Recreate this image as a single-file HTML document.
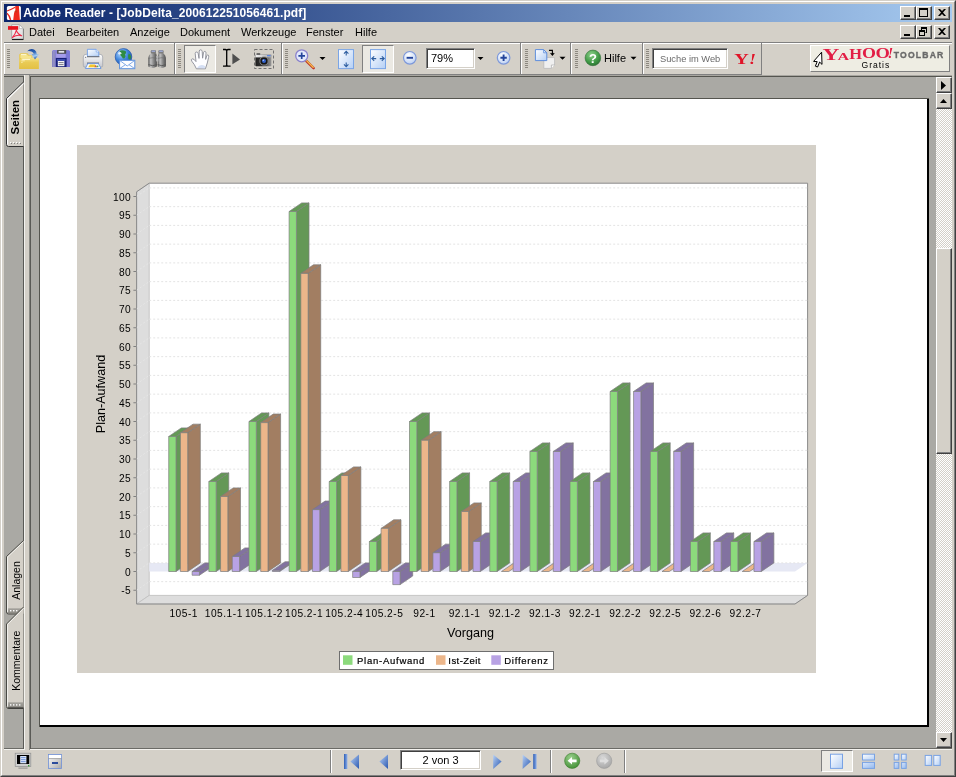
<!DOCTYPE html>
<html lang="de"><head><meta charset="utf-8"><title>Adobe Reader - [JobDelta_200612251056461.pdf]</title>
<style>
html,body{margin:0;padding:0}
body{width:956px;height:777px;position:relative;overflow:hidden;background:#d4d0c8;font-family:"Liberation Sans",sans-serif;font-size:11px;color:#000}
.a{position:absolute}
#win{left:0;top:0;width:956px;height:777px;box-sizing:border-box;border:1px solid;border-color:#d4d0c8 #404040 #404040 #d4d0c8}
#win2{left:1px;top:1px;width:954px;height:775px;box-sizing:border-box;border:1px solid;border-color:#fff #808080 #808080 #fff}
#title{left:4px;top:4px;width:948px;height:18px;background:linear-gradient(90deg,#0a246a 0%,#a6caf0 100%)}
#ttxt{left:23.3px;top:6px;color:#fff;font-weight:bold;font-size:12px;line-height:14px;white-space:nowrap;letter-spacing:.08px}
.cb{width:16px;height:14px;box-sizing:border-box;background:#d4d0c8;border:1px solid;border-color:#fff #404040 #404040 #fff;box-shadow:inset -1px -1px 0 #808080}
.menu{top:25px;font-size:11px;line-height:14px;white-space:nowrap}
.tbline1{left:4px;top:42px;width:948px;height:1px;background:#808080}
.tbline2{left:4px;top:43px;width:948px;height:1px;background:#fff}
.grip{width:3px;height:20px;top:49px;background:repeating-linear-gradient(180deg,#8c8880 0,#8c8880 1px,#d4d0c8 1px,#d4d0c8 2px)}
.sepv{top:43px;width:2px;height:31px;border-left:1px solid #808080;border-right:1px solid #fff;box-sizing:border-box}
.pressed{background:#ebe9e3;box-sizing:border-box;border:1px solid;border-color:#808080 #fff #fff #808080}
.inp{background:#fff;box-sizing:border-box;border:1px solid;border-color:#808080 #fff #fff #808080;box-shadow:inset 1px 1px 0 #404040,inset -1px -1px 0 #d4d0c8}
svg{position:absolute;left:0;top:0;overflow:visible}
.tk{font-family:"Liberation Sans",sans-serif;font-size:10.2px;fill:#000;letter-spacing:.3px}
.ax{font-family:"Liberation Sans",sans-serif;font-size:12.6px;fill:#000}
.lg{font-family:"Liberation Sans",sans-serif;font-size:9.5px;fill:#000;letter-spacing:.75px;stroke:#000;stroke-width:.2px}
.sb{background:#d4d0c8;box-sizing:border-box;border:1px solid;border-color:#fff #404040 #404040 #fff;box-shadow:inset -1px -1px 0 #808080}
</style></head><body>
<div id="root" class="a" style="left:0;top:0;width:956px;height:777px;will-change:transform">
<div id="win" class="a"></div><div id="win2" class="a"></div>
<!-- title bar -->
<div id="title" class="a"></div>
<div id="ttxt" class="a">Adobe Reader - [JobDelta_200612251056461.pdf]</div>
<div class="a cb" style="left:900px;top:6px"></div><div class="a cb" style="left:916px;top:6px"></div><div class="a cb" style="left:934px;top:6px"></div>
<div class="a cb" style="left:900px;top:25px"></div><div class="a cb" style="left:916px;top:25px"></div><div class="a cb" style="left:934px;top:25px"></div>
<!-- menu -->
<div class="a menu" style="left:29px">Datei</div>
<div class="a menu" style="left:66px">Bearbeiten</div>
<div class="a menu" style="left:130px">Anzeige</div>
<div class="a menu" style="left:180px">Dokument</div>
<div class="a menu" style="left:241px">Werkzeuge</div>
<div class="a menu" style="left:306px">Fenster</div>
<div class="a menu" style="left:355px">Hilfe</div>
<div class="a tbline1"></div><div class="a tbline2"></div>
<!-- toolbar -->
<div class="a grip" style="left:7px"></div>
<div class="a sepv" style="left:174px"></div><div class="a grip" style="left:178px"></div>
<div class="a pressed" style="left:184px;top:45px;width:32px;height:28px"></div>
<div class="a sepv" style="left:281px"></div><div class="a grip" style="left:285px"></div>
<div class="a pressed" style="left:362px;top:45px;width:32px;height:28px"></div>
<div class="a inp" style="left:426px;top:48px;width:49px;height:21px"></div>
<div class="a" style="left:431px;top:51px;font-size:11px;line-height:14px">79%</div>
<div class="a sepv" style="left:520px"></div><div class="a grip" style="left:525px"></div>
<div class="a sepv" style="left:570px"></div><div class="a grip" style="left:575px"></div>
<div class="a" style="left:604px;top:51px;font-size:11px;line-height:14px">Hilfe</div>
<div class="a sepv" style="left:642px"></div><div class="a grip" style="left:646px"></div>
<div class="a inp" style="left:652px;top:48px;width:76px;height:21px"></div>
<div class="a" style="left:660px;top:53px;font-size:9.3px;line-height:12px;color:#6a6a6a;white-space:nowrap">Suche im Web</div>
<div class="a" style="left:761px;top:43px;width:1px;height:31px;background:#808080"></div>
<div class="a" style="left:810px;top:45px;width:140px;height:27px;box-sizing:border-box;background:#eeede3;border:1px solid;border-color:#fff #808080 #808080 #fff"></div>
<div class="a" style="left:4px;top:44px;width:1px;height:30px;background:#fff"></div>
<div class="a" style="left:4px;top:74px;width:758px;height:1px;background:#808080"></div>
<div class="a" style="left:4px;top:75px;width:948px;height:1px;background:#a8a6a0"></div>
<!-- workspace -->
<div class="a" style="left:4px;top:76px;width:948px;height:673px;background:#aaa9a4"></div>
<div class="a" style="left:4px;top:76px;width:948px;height:1px;background:#55554f"></div>
<div class="a" style="left:4px;top:748px;width:948px;height:1px;background:#6b6b66"></div>
<div class="a" style="left:4px;top:749px;width:948px;height:1px;background:#f4f3ef"></div>
<div class="a" style="left:23px;top:77px;width:1px;height:672px;background:#5a5a56"></div>
<div class="a" style="left:24px;top:75px;width:6px;height:675px;background:#d4d0c8;box-sizing:border-box;border-left:1px solid #f4f3ef;border-right:1px solid #8a8a84"></div>
<div class="a" style="left:30px;top:77px;width:1px;height:672px;background:#5a5a56"></div>
<!-- page -->
<div class="a" style="left:39px;top:98px;width:890px;height:629px;background:#000;box-sizing:border-box;border-top:1px solid #55554f;border-left:1px solid #55554f"></div>
<div class="a" style="left:40px;top:99px;width:887px;height:626px;background:#fff"></div>
<!-- scrollbar -->
<div class="a" style="left:936px;top:77px;width:16px;height:671px;background:repeating-conic-gradient(#fff 0 25%,#d4d0c8 0 50%) 0 0/2px 2px"></div>
<div class="a sb" style="left:936px;top:77px;width:16px;height:16px"></div>
<div class="a sb" style="left:936px;top:93px;width:16px;height:16px"></div>
<div class="a sb" style="left:936px;top:248px;width:16px;height:206px"></div>
<div class="a sb" style="left:936px;top:732px;width:16px;height:16px"></div>
<!-- status bar -->
<div class="a" style="left:4px;top:750px;width:948px;height:23px;background:#d4d0c8"></div>
<div class="a sepv" style="left:330px;top:750px;height:23px"></div>
<div class="a inp" style="left:400px;top:750px;width:81px;height:20px"></div>
<div class="a" style="left:400px;top:753px;width:81px;text-align:center;font-size:11px;line-height:14px">2 von 3</div>
<div class="a sepv" style="left:550px;top:750px;height:23px"></div>
<div class="a sepv" style="left:624px;top:750px;height:23px"></div>
<div class="a pressed" style="left:821px;top:750px;width:32px;height:22px"></div>
<svg width="956" height="777" viewBox="0 0 956 777">
<g id="chart">
<rect x="77" y="145" width="739" height="528" fill="#d4d0c8"/>
<polygon points="149.2,183.2 807.6,183.2 807.6,595.4 149.2,595.4" fill="#ffffff"/>
<polygon points="136.6,191.8 149.2,183.2 149.2,595.4 136.6,604" fill="#dddddd" stroke="#c0c0c0" stroke-width="0.8"/>
<polygon points="136.6,604 149.2,595.4 807.6,595.4 795,604" fill="#dddddd" stroke="#c0c0c0" stroke-width="0.8"/>
<path d="M136.6 191.8 L149.2 183.2 L807.6 183.2 L807.6 595.4" fill="none" stroke="#8a8a8a" stroke-width="1"/>
<path d="M136.6 191.8 L136.6 604 L795 604 L807.6 595.4" fill="none" stroke="#8a8a8a" stroke-width="1"/>
<polygon points="149.2,571.5 149.2,562.9 807.6,562.9 795,571.5" fill="#e6e8f4"/>
<path d="M136.6 590.25 L149.2 581.65" stroke="#e6e6e6" stroke-width="1" stroke-dasharray="2 2" fill="none"/>
<path d="M149.2 581.65 L807.6 581.65" stroke="#e4e4e4" stroke-width="1" stroke-dasharray="2 2" fill="none"/>
<path d="M133.4 590.25 L136.6 590.25" stroke="#808080" stroke-width="1" fill="none"/>
<text x="130.9" y="594.45" text-anchor="end" class="tk">-5</text>
<path d="M136.6 571.5 L149.2 562.9" stroke="#e6e6e6" stroke-width="1" stroke-dasharray="2 2" fill="none"/>
<path d="M149.2 562.9 L807.6 562.9" stroke="#e4e4e4" stroke-width="1" stroke-dasharray="2 2" fill="none"/>
<path d="M133.4 571.5 L136.6 571.5" stroke="#808080" stroke-width="1" fill="none"/>
<text x="130.9" y="575.7" text-anchor="end" class="tk">0</text>
<path d="M136.6 552.75 L149.2 544.15" stroke="#e6e6e6" stroke-width="1" stroke-dasharray="2 2" fill="none"/>
<path d="M149.2 544.15 L807.6 544.15" stroke="#e4e4e4" stroke-width="1" stroke-dasharray="2 2" fill="none"/>
<path d="M133.4 552.75 L136.6 552.75" stroke="#808080" stroke-width="1" fill="none"/>
<text x="130.9" y="556.95" text-anchor="end" class="tk">5</text>
<path d="M136.6 534 L149.2 525.4" stroke="#e6e6e6" stroke-width="1" stroke-dasharray="2 2" fill="none"/>
<path d="M149.2 525.4 L807.6 525.4" stroke="#e4e4e4" stroke-width="1" stroke-dasharray="2 2" fill="none"/>
<path d="M133.4 534 L136.6 534" stroke="#808080" stroke-width="1" fill="none"/>
<text x="130.9" y="538.2" text-anchor="end" class="tk">10</text>
<path d="M136.6 515.25 L149.2 506.65" stroke="#e6e6e6" stroke-width="1" stroke-dasharray="2 2" fill="none"/>
<path d="M149.2 506.65 L807.6 506.65" stroke="#e4e4e4" stroke-width="1" stroke-dasharray="2 2" fill="none"/>
<path d="M133.4 515.25 L136.6 515.25" stroke="#808080" stroke-width="1" fill="none"/>
<text x="130.9" y="519.45" text-anchor="end" class="tk">15</text>
<path d="M136.6 496.5 L149.2 487.9" stroke="#e6e6e6" stroke-width="1" stroke-dasharray="2 2" fill="none"/>
<path d="M149.2 487.9 L807.6 487.9" stroke="#e4e4e4" stroke-width="1" stroke-dasharray="2 2" fill="none"/>
<path d="M133.4 496.5 L136.6 496.5" stroke="#808080" stroke-width="1" fill="none"/>
<text x="130.9" y="500.7" text-anchor="end" class="tk">20</text>
<path d="M136.6 477.75 L149.2 469.15" stroke="#e6e6e6" stroke-width="1" stroke-dasharray="2 2" fill="none"/>
<path d="M149.2 469.15 L807.6 469.15" stroke="#e4e4e4" stroke-width="1" stroke-dasharray="2 2" fill="none"/>
<path d="M133.4 477.75 L136.6 477.75" stroke="#808080" stroke-width="1" fill="none"/>
<text x="130.9" y="481.95" text-anchor="end" class="tk">25</text>
<path d="M136.6 459 L149.2 450.4" stroke="#e6e6e6" stroke-width="1" stroke-dasharray="2 2" fill="none"/>
<path d="M149.2 450.4 L807.6 450.4" stroke="#e4e4e4" stroke-width="1" stroke-dasharray="2 2" fill="none"/>
<path d="M133.4 459 L136.6 459" stroke="#808080" stroke-width="1" fill="none"/>
<text x="130.9" y="463.2" text-anchor="end" class="tk">30</text>
<path d="M136.6 440.25 L149.2 431.65" stroke="#e6e6e6" stroke-width="1" stroke-dasharray="2 2" fill="none"/>
<path d="M149.2 431.65 L807.6 431.65" stroke="#e4e4e4" stroke-width="1" stroke-dasharray="2 2" fill="none"/>
<path d="M133.4 440.25 L136.6 440.25" stroke="#808080" stroke-width="1" fill="none"/>
<text x="130.9" y="444.45" text-anchor="end" class="tk">35</text>
<path d="M136.6 421.5 L149.2 412.9" stroke="#e6e6e6" stroke-width="1" stroke-dasharray="2 2" fill="none"/>
<path d="M149.2 412.9 L807.6 412.9" stroke="#e4e4e4" stroke-width="1" stroke-dasharray="2 2" fill="none"/>
<path d="M133.4 421.5 L136.6 421.5" stroke="#808080" stroke-width="1" fill="none"/>
<text x="130.9" y="425.7" text-anchor="end" class="tk">40</text>
<path d="M136.6 402.75 L149.2 394.15" stroke="#e6e6e6" stroke-width="1" stroke-dasharray="2 2" fill="none"/>
<path d="M149.2 394.15 L807.6 394.15" stroke="#e4e4e4" stroke-width="1" stroke-dasharray="2 2" fill="none"/>
<path d="M133.4 402.75 L136.6 402.75" stroke="#808080" stroke-width="1" fill="none"/>
<text x="130.9" y="406.95" text-anchor="end" class="tk">45</text>
<path d="M136.6 384 L149.2 375.4" stroke="#e6e6e6" stroke-width="1" stroke-dasharray="2 2" fill="none"/>
<path d="M149.2 375.4 L807.6 375.4" stroke="#e4e4e4" stroke-width="1" stroke-dasharray="2 2" fill="none"/>
<path d="M133.4 384 L136.6 384" stroke="#808080" stroke-width="1" fill="none"/>
<text x="130.9" y="388.2" text-anchor="end" class="tk">50</text>
<path d="M136.6 365.25 L149.2 356.65" stroke="#e6e6e6" stroke-width="1" stroke-dasharray="2 2" fill="none"/>
<path d="M149.2 356.65 L807.6 356.65" stroke="#e4e4e4" stroke-width="1" stroke-dasharray="2 2" fill="none"/>
<path d="M133.4 365.25 L136.6 365.25" stroke="#808080" stroke-width="1" fill="none"/>
<text x="130.9" y="369.45" text-anchor="end" class="tk">55</text>
<path d="M136.6 346.5 L149.2 337.9" stroke="#e6e6e6" stroke-width="1" stroke-dasharray="2 2" fill="none"/>
<path d="M149.2 337.9 L807.6 337.9" stroke="#e4e4e4" stroke-width="1" stroke-dasharray="2 2" fill="none"/>
<path d="M133.4 346.5 L136.6 346.5" stroke="#808080" stroke-width="1" fill="none"/>
<text x="130.9" y="350.7" text-anchor="end" class="tk">60</text>
<path d="M136.6 327.75 L149.2 319.15" stroke="#e6e6e6" stroke-width="1" stroke-dasharray="2 2" fill="none"/>
<path d="M149.2 319.15 L807.6 319.15" stroke="#e4e4e4" stroke-width="1" stroke-dasharray="2 2" fill="none"/>
<path d="M133.4 327.75 L136.6 327.75" stroke="#808080" stroke-width="1" fill="none"/>
<text x="130.9" y="331.95" text-anchor="end" class="tk">65</text>
<path d="M136.6 309 L149.2 300.4" stroke="#e6e6e6" stroke-width="1" stroke-dasharray="2 2" fill="none"/>
<path d="M149.2 300.4 L807.6 300.4" stroke="#e4e4e4" stroke-width="1" stroke-dasharray="2 2" fill="none"/>
<path d="M133.4 309 L136.6 309" stroke="#808080" stroke-width="1" fill="none"/>
<text x="130.9" y="313.2" text-anchor="end" class="tk">70</text>
<path d="M136.6 290.25 L149.2 281.65" stroke="#e6e6e6" stroke-width="1" stroke-dasharray="2 2" fill="none"/>
<path d="M149.2 281.65 L807.6 281.65" stroke="#e4e4e4" stroke-width="1" stroke-dasharray="2 2" fill="none"/>
<path d="M133.4 290.25 L136.6 290.25" stroke="#808080" stroke-width="1" fill="none"/>
<text x="130.9" y="294.45" text-anchor="end" class="tk">75</text>
<path d="M136.6 271.5 L149.2 262.9" stroke="#e6e6e6" stroke-width="1" stroke-dasharray="2 2" fill="none"/>
<path d="M149.2 262.9 L807.6 262.9" stroke="#e4e4e4" stroke-width="1" stroke-dasharray="2 2" fill="none"/>
<path d="M133.4 271.5 L136.6 271.5" stroke="#808080" stroke-width="1" fill="none"/>
<text x="130.9" y="275.7" text-anchor="end" class="tk">80</text>
<path d="M136.6 252.75 L149.2 244.15" stroke="#e6e6e6" stroke-width="1" stroke-dasharray="2 2" fill="none"/>
<path d="M149.2 244.15 L807.6 244.15" stroke="#e4e4e4" stroke-width="1" stroke-dasharray="2 2" fill="none"/>
<path d="M133.4 252.75 L136.6 252.75" stroke="#808080" stroke-width="1" fill="none"/>
<text x="130.9" y="256.95" text-anchor="end" class="tk">85</text>
<path d="M136.6 234 L149.2 225.4" stroke="#e6e6e6" stroke-width="1" stroke-dasharray="2 2" fill="none"/>
<path d="M149.2 225.4 L807.6 225.4" stroke="#e4e4e4" stroke-width="1" stroke-dasharray="2 2" fill="none"/>
<path d="M133.4 234 L136.6 234" stroke="#808080" stroke-width="1" fill="none"/>
<text x="130.9" y="238.2" text-anchor="end" class="tk">90</text>
<path d="M136.6 215.25 L149.2 206.65" stroke="#e6e6e6" stroke-width="1" stroke-dasharray="2 2" fill="none"/>
<path d="M149.2 206.65 L807.6 206.65" stroke="#e4e4e4" stroke-width="1" stroke-dasharray="2 2" fill="none"/>
<path d="M133.4 215.25 L136.6 215.25" stroke="#808080" stroke-width="1" fill="none"/>
<text x="130.9" y="219.45" text-anchor="end" class="tk">95</text>
<path d="M136.6 196.5 L149.2 187.9" stroke="#e6e6e6" stroke-width="1" stroke-dasharray="2 2" fill="none"/>
<path d="M149.2 187.9 L807.6 187.9" stroke="#e4e4e4" stroke-width="1" stroke-dasharray="2 2" fill="none"/>
<path d="M133.4 196.5 L136.6 196.5" stroke="#808080" stroke-width="1" fill="none"/>
<text x="130.9" y="200.7" text-anchor="end" class="tk">100</text>
<polygon points="176.04,436.5 188.64,427.9 188.64,562.9 176.04,571.5" fill="#649856" stroke="#7c7c7c" stroke-width="0.7"/>
<polygon points="168.72,436.5 181.32,427.9 188.64,427.9 176.04,436.5" fill="#649856" stroke="#7c7c7c" stroke-width="0.7"/>
<polygon points="168.72,436.5 176.04,436.5 176.04,571.5 168.72,571.5" fill="#8cda7c" stroke="#7c7c7c" stroke-width="0.7"/>
<polygon points="187.74,432.75 200.34,424.15 200.34,562.9 187.74,571.5" fill="#a27e62" stroke="#7c7c7c" stroke-width="0.7"/>
<polygon points="180.42,432.75 193.02,424.15 200.34,424.15 187.74,432.75" fill="#a27e62" stroke="#7c7c7c" stroke-width="0.7"/>
<polygon points="180.42,432.75 187.74,432.75 187.74,571.5 180.42,571.5" fill="#ecb68a" stroke="#7c7c7c" stroke-width="0.7"/>
<polygon points="199.45,571.5 212.05,562.9 212.05,566.65 199.45,575.25" fill="#8272a0" stroke="#7c7c7c" stroke-width="0.7"/>
<polygon points="192.13,571.5 204.73,562.9 212.05,562.9 199.45,571.5" fill="#8272a0" stroke="#7c7c7c" stroke-width="0.7"/>
<polygon points="192.13,571.5 199.45,571.5 199.45,575.25 192.13,575.25" fill="#b8a2e4" stroke="#7c7c7c" stroke-width="0.7"/>
<polygon points="216.17,481.5 228.77,472.9 228.77,562.9 216.17,571.5" fill="#649856" stroke="#7c7c7c" stroke-width="0.7"/>
<polygon points="208.85,481.5 221.45,472.9 228.77,472.9 216.17,481.5" fill="#649856" stroke="#7c7c7c" stroke-width="0.7"/>
<polygon points="208.85,481.5 216.17,481.5 216.17,571.5 208.85,571.5" fill="#8cda7c" stroke="#7c7c7c" stroke-width="0.7"/>
<polygon points="227.87,496.5 240.47,487.9 240.47,562.9 227.87,571.5" fill="#a27e62" stroke="#7c7c7c" stroke-width="0.7"/>
<polygon points="220.56,496.5 233.16,487.9 240.47,487.9 227.87,496.5" fill="#a27e62" stroke="#7c7c7c" stroke-width="0.7"/>
<polygon points="220.56,496.5 227.87,496.5 227.87,571.5 220.56,571.5" fill="#ecb68a" stroke="#7c7c7c" stroke-width="0.7"/>
<polygon points="239.58,556.5 252.18,547.9 252.18,562.9 239.58,571.5" fill="#8272a0" stroke="#7c7c7c" stroke-width="0.7"/>
<polygon points="232.26,556.5 244.86,547.9 252.18,547.9 239.58,556.5" fill="#8272a0" stroke="#7c7c7c" stroke-width="0.7"/>
<polygon points="232.26,556.5 239.58,556.5 239.58,571.5 232.26,571.5" fill="#b8a2e4" stroke="#7c7c7c" stroke-width="0.7"/>
<polygon points="256.3,421.5 268.9,412.9 268.9,562.9 256.3,571.5" fill="#649856" stroke="#7c7c7c" stroke-width="0.7"/>
<polygon points="248.98,421.5 261.58,412.9 268.9,412.9 256.3,421.5" fill="#649856" stroke="#7c7c7c" stroke-width="0.7"/>
<polygon points="248.98,421.5 256.3,421.5 256.3,571.5 248.98,571.5" fill="#8cda7c" stroke="#7c7c7c" stroke-width="0.7"/>
<polygon points="268,422.62 280.6,414.02 280.6,562.9 268,571.5" fill="#a27e62" stroke="#7c7c7c" stroke-width="0.7"/>
<polygon points="260.69,422.62 273.29,414.02 280.6,414.02 268,422.62" fill="#a27e62" stroke="#7c7c7c" stroke-width="0.7"/>
<polygon points="260.69,422.62 268,422.62 268,571.5 260.69,571.5" fill="#ecb68a" stroke="#7c7c7c" stroke-width="0.7"/>
<polygon points="279.71,570.38 292.31,561.77 292.31,562.9 279.71,571.5" fill="#8272a0" stroke="#7c7c7c" stroke-width="0.7"/>
<polygon points="272.39,570.38 284.99,561.77 292.31,561.77 279.71,570.38" fill="#8272a0" stroke="#7c7c7c" stroke-width="0.7"/>
<polygon points="272.39,570.38 279.71,570.38 279.71,571.5 272.39,571.5" fill="#b8a2e4" stroke="#7c7c7c" stroke-width="0.7"/>
<polygon points="296.43,211.5 309.03,202.9 309.03,562.9 296.43,571.5" fill="#649856" stroke="#7c7c7c" stroke-width="0.7"/>
<polygon points="289.11,211.5 301.71,202.9 309.03,202.9 296.43,211.5" fill="#649856" stroke="#7c7c7c" stroke-width="0.7"/>
<polygon points="289.11,211.5 296.43,211.5 296.43,571.5 289.11,571.5" fill="#8cda7c" stroke="#7c7c7c" stroke-width="0.7"/>
<polygon points="308.13,273.38 320.73,264.77 320.73,562.9 308.13,571.5" fill="#a27e62" stroke="#7c7c7c" stroke-width="0.7"/>
<polygon points="300.82,273.38 313.42,264.77 320.73,264.77 308.13,273.38" fill="#a27e62" stroke="#7c7c7c" stroke-width="0.7"/>
<polygon points="300.82,273.38 308.13,273.38 308.13,571.5 300.82,571.5" fill="#ecb68a" stroke="#7c7c7c" stroke-width="0.7"/>
<polygon points="319.84,509.62 332.44,501.02 332.44,562.9 319.84,571.5" fill="#8272a0" stroke="#7c7c7c" stroke-width="0.7"/>
<polygon points="312.52,509.62 325.12,501.02 332.44,501.02 319.84,509.62" fill="#8272a0" stroke="#7c7c7c" stroke-width="0.7"/>
<polygon points="312.52,509.62 319.84,509.62 319.84,571.5 312.52,571.5" fill="#b8a2e4" stroke="#7c7c7c" stroke-width="0.7"/>
<polygon points="336.56,481.5 349.16,472.9 349.16,562.9 336.56,571.5" fill="#649856" stroke="#7c7c7c" stroke-width="0.7"/>
<polygon points="329.24,481.5 341.84,472.9 349.16,472.9 336.56,481.5" fill="#649856" stroke="#7c7c7c" stroke-width="0.7"/>
<polygon points="329.24,481.5 336.56,481.5 336.56,571.5 329.24,571.5" fill="#8cda7c" stroke="#7c7c7c" stroke-width="0.7"/>
<polygon points="348.26,475.5 360.86,466.9 360.86,562.9 348.26,571.5" fill="#a27e62" stroke="#7c7c7c" stroke-width="0.7"/>
<polygon points="340.95,475.5 353.55,466.9 360.86,466.9 348.26,475.5" fill="#a27e62" stroke="#7c7c7c" stroke-width="0.7"/>
<polygon points="340.95,475.5 348.26,475.5 348.26,571.5 340.95,571.5" fill="#ecb68a" stroke="#7c7c7c" stroke-width="0.7"/>
<polygon points="359.97,571.5 372.57,562.9 372.57,568.9 359.97,577.5" fill="#8272a0" stroke="#7c7c7c" stroke-width="0.7"/>
<polygon points="352.65,571.5 365.25,562.9 372.57,562.9 359.97,571.5" fill="#8272a0" stroke="#7c7c7c" stroke-width="0.7"/>
<polygon points="352.65,571.5 359.97,571.5 359.97,577.5 352.65,577.5" fill="#b8a2e4" stroke="#7c7c7c" stroke-width="0.7"/>
<polygon points="376.69,541.5 389.29,532.9 389.29,562.9 376.69,571.5" fill="#649856" stroke="#7c7c7c" stroke-width="0.7"/>
<polygon points="369.38,541.5 381.98,532.9 389.29,532.9 376.69,541.5" fill="#649856" stroke="#7c7c7c" stroke-width="0.7"/>
<polygon points="369.38,541.5 376.69,541.5 376.69,571.5 369.38,571.5" fill="#8cda7c" stroke="#7c7c7c" stroke-width="0.7"/>
<polygon points="388.4,528.38 401,519.77 401,562.9 388.4,571.5" fill="#a27e62" stroke="#7c7c7c" stroke-width="0.7"/>
<polygon points="381.08,528.38 393.68,519.77 401,519.77 388.4,528.38" fill="#a27e62" stroke="#7c7c7c" stroke-width="0.7"/>
<polygon points="381.08,528.38 388.4,528.38 388.4,571.5 381.08,571.5" fill="#ecb68a" stroke="#7c7c7c" stroke-width="0.7"/>
<polygon points="400.1,571.5 412.7,562.9 412.7,576.02 400.1,584.62" fill="#8272a0" stroke="#7c7c7c" stroke-width="0.7"/>
<polygon points="392.79,571.5 405.39,562.9 412.7,562.9 400.1,571.5" fill="#8272a0" stroke="#7c7c7c" stroke-width="0.7"/>
<polygon points="392.79,571.5 400.1,571.5 400.1,584.62 392.79,584.62" fill="#b8a2e4" stroke="#7c7c7c" stroke-width="0.7"/>
<polygon points="416.82,421.5 429.42,412.9 429.42,562.9 416.82,571.5" fill="#649856" stroke="#7c7c7c" stroke-width="0.7"/>
<polygon points="409.51,421.5 422.11,412.9 429.42,412.9 416.82,421.5" fill="#649856" stroke="#7c7c7c" stroke-width="0.7"/>
<polygon points="409.51,421.5 416.82,421.5 416.82,571.5 409.51,571.5" fill="#8cda7c" stroke="#7c7c7c" stroke-width="0.7"/>
<polygon points="428.53,440.25 441.13,431.65 441.13,562.9 428.53,571.5" fill="#a27e62" stroke="#7c7c7c" stroke-width="0.7"/>
<polygon points="421.21,440.25 433.81,431.65 441.13,431.65 428.53,440.25" fill="#a27e62" stroke="#7c7c7c" stroke-width="0.7"/>
<polygon points="421.21,440.25 428.53,440.25 428.53,571.5 421.21,571.5" fill="#ecb68a" stroke="#7c7c7c" stroke-width="0.7"/>
<polygon points="440.23,552.75 452.83,544.15 452.83,562.9 440.23,571.5" fill="#8272a0" stroke="#7c7c7c" stroke-width="0.7"/>
<polygon points="432.92,552.75 445.52,544.15 452.83,544.15 440.23,552.75" fill="#8272a0" stroke="#7c7c7c" stroke-width="0.7"/>
<polygon points="432.92,552.75 440.23,552.75 440.23,571.5 432.92,571.5" fill="#b8a2e4" stroke="#7c7c7c" stroke-width="0.7"/>
<polygon points="456.95,481.5 469.55,472.9 469.55,562.9 456.95,571.5" fill="#649856" stroke="#7c7c7c" stroke-width="0.7"/>
<polygon points="449.64,481.5 462.24,472.9 469.55,472.9 456.95,481.5" fill="#649856" stroke="#7c7c7c" stroke-width="0.7"/>
<polygon points="449.64,481.5 456.95,481.5 456.95,571.5 449.64,571.5" fill="#8cda7c" stroke="#7c7c7c" stroke-width="0.7"/>
<polygon points="468.66,511.5 481.26,502.9 481.26,562.9 468.66,571.5" fill="#a27e62" stroke="#7c7c7c" stroke-width="0.7"/>
<polygon points="461.34,511.5 473.94,502.9 481.26,502.9 468.66,511.5" fill="#a27e62" stroke="#7c7c7c" stroke-width="0.7"/>
<polygon points="461.34,511.5 468.66,511.5 468.66,571.5 461.34,571.5" fill="#ecb68a" stroke="#7c7c7c" stroke-width="0.7"/>
<polygon points="480.36,541.5 492.96,532.9 492.96,562.9 480.36,571.5" fill="#8272a0" stroke="#7c7c7c" stroke-width="0.7"/>
<polygon points="473.05,541.5 485.65,532.9 492.96,532.9 480.36,541.5" fill="#8272a0" stroke="#7c7c7c" stroke-width="0.7"/>
<polygon points="473.05,541.5 480.36,541.5 480.36,571.5 473.05,571.5" fill="#b8a2e4" stroke="#7c7c7c" stroke-width="0.7"/>
<polygon points="497.08,481.5 509.68,472.9 509.68,562.9 497.08,571.5" fill="#649856" stroke="#7c7c7c" stroke-width="0.7"/>
<polygon points="489.77,481.5 502.37,472.9 509.68,472.9 497.08,481.5" fill="#649856" stroke="#7c7c7c" stroke-width="0.7"/>
<polygon points="489.77,481.5 497.08,481.5 497.08,571.5 489.77,571.5" fill="#8cda7c" stroke="#7c7c7c" stroke-width="0.7"/>
<polygon points="501.47,571.5 514.07,562.9 521.39,562.9 508.79,571.5" fill="#ecb68a" stroke="#7c7c7c" stroke-width="0.7"/>
<polygon points="520.49,481.5 533.09,472.9 533.09,562.9 520.49,571.5" fill="#8272a0" stroke="#7c7c7c" stroke-width="0.7"/>
<polygon points="513.18,481.5 525.78,472.9 533.09,472.9 520.49,481.5" fill="#8272a0" stroke="#7c7c7c" stroke-width="0.7"/>
<polygon points="513.18,481.5 520.49,481.5 520.49,571.5 513.18,571.5" fill="#b8a2e4" stroke="#7c7c7c" stroke-width="0.7"/>
<polygon points="537.21,451.5 549.81,442.9 549.81,562.9 537.21,571.5" fill="#649856" stroke="#7c7c7c" stroke-width="0.7"/>
<polygon points="529.9,451.5 542.5,442.9 549.81,442.9 537.21,451.5" fill="#649856" stroke="#7c7c7c" stroke-width="0.7"/>
<polygon points="529.9,451.5 537.21,451.5 537.21,571.5 529.9,571.5" fill="#8cda7c" stroke="#7c7c7c" stroke-width="0.7"/>
<polygon points="541.6,571.5 554.2,562.9 561.52,562.9 548.92,571.5" fill="#ecb68a" stroke="#7c7c7c" stroke-width="0.7"/>
<polygon points="560.62,451.5 573.22,442.9 573.22,562.9 560.62,571.5" fill="#8272a0" stroke="#7c7c7c" stroke-width="0.7"/>
<polygon points="553.31,451.5 565.91,442.9 573.22,442.9 560.62,451.5" fill="#8272a0" stroke="#7c7c7c" stroke-width="0.7"/>
<polygon points="553.31,451.5 560.62,451.5 560.62,571.5 553.31,571.5" fill="#b8a2e4" stroke="#7c7c7c" stroke-width="0.7"/>
<polygon points="577.35,481.5 589.95,472.9 589.95,562.9 577.35,571.5" fill="#649856" stroke="#7c7c7c" stroke-width="0.7"/>
<polygon points="570.03,481.5 582.63,472.9 589.95,472.9 577.35,481.5" fill="#649856" stroke="#7c7c7c" stroke-width="0.7"/>
<polygon points="570.03,481.5 577.35,481.5 577.35,571.5 570.03,571.5" fill="#8cda7c" stroke="#7c7c7c" stroke-width="0.7"/>
<polygon points="581.74,571.5 594.34,562.9 601.65,562.9 589.05,571.5" fill="#ecb68a" stroke="#7c7c7c" stroke-width="0.7"/>
<polygon points="600.76,481.5 613.36,472.9 613.36,562.9 600.76,571.5" fill="#8272a0" stroke="#7c7c7c" stroke-width="0.7"/>
<polygon points="593.44,481.5 606.04,472.9 613.36,472.9 600.76,481.5" fill="#8272a0" stroke="#7c7c7c" stroke-width="0.7"/>
<polygon points="593.44,481.5 600.76,481.5 600.76,571.5 593.44,571.5" fill="#b8a2e4" stroke="#7c7c7c" stroke-width="0.7"/>
<polygon points="617.48,391.5 630.08,382.9 630.08,562.9 617.48,571.5" fill="#649856" stroke="#7c7c7c" stroke-width="0.7"/>
<polygon points="610.16,391.5 622.76,382.9 630.08,382.9 617.48,391.5" fill="#649856" stroke="#7c7c7c" stroke-width="0.7"/>
<polygon points="610.16,391.5 617.48,391.5 617.48,571.5 610.16,571.5" fill="#8cda7c" stroke="#7c7c7c" stroke-width="0.7"/>
<polygon points="621.87,571.5 634.47,562.9 641.78,562.9 629.18,571.5" fill="#ecb68a" stroke="#7c7c7c" stroke-width="0.7"/>
<polygon points="640.89,391.5 653.49,382.9 653.49,562.9 640.89,571.5" fill="#8272a0" stroke="#7c7c7c" stroke-width="0.7"/>
<polygon points="633.57,391.5 646.17,382.9 653.49,382.9 640.89,391.5" fill="#8272a0" stroke="#7c7c7c" stroke-width="0.7"/>
<polygon points="633.57,391.5 640.89,391.5 640.89,571.5 633.57,571.5" fill="#b8a2e4" stroke="#7c7c7c" stroke-width="0.7"/>
<polygon points="657.61,451.5 670.21,442.9 670.21,562.9 657.61,571.5" fill="#649856" stroke="#7c7c7c" stroke-width="0.7"/>
<polygon points="650.29,451.5 662.89,442.9 670.21,442.9 657.61,451.5" fill="#649856" stroke="#7c7c7c" stroke-width="0.7"/>
<polygon points="650.29,451.5 657.61,451.5 657.61,571.5 650.29,571.5" fill="#8cda7c" stroke="#7c7c7c" stroke-width="0.7"/>
<polygon points="662,571.5 674.6,562.9 681.91,562.9 669.31,571.5" fill="#ecb68a" stroke="#7c7c7c" stroke-width="0.7"/>
<polygon points="681.02,451.5 693.62,442.9 693.62,562.9 681.02,571.5" fill="#8272a0" stroke="#7c7c7c" stroke-width="0.7"/>
<polygon points="673.7,451.5 686.3,442.9 693.62,442.9 681.02,451.5" fill="#8272a0" stroke="#7c7c7c" stroke-width="0.7"/>
<polygon points="673.7,451.5 681.02,451.5 681.02,571.5 673.7,571.5" fill="#b8a2e4" stroke="#7c7c7c" stroke-width="0.7"/>
<polygon points="697.74,541.5 710.34,532.9 710.34,562.9 697.74,571.5" fill="#649856" stroke="#7c7c7c" stroke-width="0.7"/>
<polygon points="690.42,541.5 703.02,532.9 710.34,532.9 697.74,541.5" fill="#649856" stroke="#7c7c7c" stroke-width="0.7"/>
<polygon points="690.42,541.5 697.74,541.5 697.74,571.5 690.42,571.5" fill="#8cda7c" stroke="#7c7c7c" stroke-width="0.7"/>
<polygon points="702.13,571.5 714.73,562.9 722.04,562.9 709.44,571.5" fill="#ecb68a" stroke="#7c7c7c" stroke-width="0.7"/>
<polygon points="721.15,541.5 733.75,532.9 733.75,562.9 721.15,571.5" fill="#8272a0" stroke="#7c7c7c" stroke-width="0.7"/>
<polygon points="713.83,541.5 726.43,532.9 733.75,532.9 721.15,541.5" fill="#8272a0" stroke="#7c7c7c" stroke-width="0.7"/>
<polygon points="713.83,541.5 721.15,541.5 721.15,571.5 713.83,571.5" fill="#b8a2e4" stroke="#7c7c7c" stroke-width="0.7"/>
<polygon points="737.87,541.5 750.47,532.9 750.47,562.9 737.87,571.5" fill="#649856" stroke="#7c7c7c" stroke-width="0.7"/>
<polygon points="730.55,541.5 743.15,532.9 750.47,532.9 737.87,541.5" fill="#649856" stroke="#7c7c7c" stroke-width="0.7"/>
<polygon points="730.55,541.5 737.87,541.5 737.87,571.5 730.55,571.5" fill="#8cda7c" stroke="#7c7c7c" stroke-width="0.7"/>
<polygon points="742.26,571.5 754.86,562.9 762.18,562.9 749.58,571.5" fill="#ecb68a" stroke="#7c7c7c" stroke-width="0.7"/>
<polygon points="761.28,541.5 773.88,532.9 773.88,562.9 761.28,571.5" fill="#8272a0" stroke="#7c7c7c" stroke-width="0.7"/>
<polygon points="753.96,541.5 766.56,532.9 773.88,532.9 761.28,541.5" fill="#8272a0" stroke="#7c7c7c" stroke-width="0.7"/>
<polygon points="753.96,541.5 761.28,541.5 761.28,571.5 753.96,571.5" fill="#b8a2e4" stroke="#7c7c7c" stroke-width="0.7"/>
<text x="183.68" y="617" text-anchor="middle" class="tk" style="letter-spacing:.5px">105-1</text>
<text x="223.81" y="617" text-anchor="middle" class="tk" style="letter-spacing:.5px">105.1-1</text>
<text x="263.94" y="617" text-anchor="middle" class="tk" style="letter-spacing:.5px">105.1-2</text>
<text x="304.08" y="617" text-anchor="middle" class="tk" style="letter-spacing:.5px">105.2-1</text>
<text x="344.21" y="617" text-anchor="middle" class="tk" style="letter-spacing:.5px">105.2-4</text>
<text x="384.34" y="617" text-anchor="middle" class="tk" style="letter-spacing:.5px">105.2-5</text>
<text x="424.47" y="617" text-anchor="middle" class="tk" style="letter-spacing:.5px">92-1</text>
<text x="464.6" y="617" text-anchor="middle" class="tk" style="letter-spacing:.5px">92.1-1</text>
<text x="504.73" y="617" text-anchor="middle" class="tk" style="letter-spacing:.5px">92.1-2</text>
<text x="544.86" y="617" text-anchor="middle" class="tk" style="letter-spacing:.5px">92.1-3</text>
<text x="584.99" y="617" text-anchor="middle" class="tk" style="letter-spacing:.5px">92.2-1</text>
<text x="625.12" y="617" text-anchor="middle" class="tk" style="letter-spacing:.5px">92.2-2</text>
<text x="665.26" y="617" text-anchor="middle" class="tk" style="letter-spacing:.5px">92.2-5</text>
<text x="705.39" y="617" text-anchor="middle" class="tk" style="letter-spacing:.5px">92.2-6</text>
<text x="745.52" y="617" text-anchor="middle" class="tk" style="letter-spacing:.5px">92.2-7</text>
<text x="470.5" y="637" text-anchor="middle" class="ax">Vorgang</text>
<text transform="translate(105.2 394) rotate(-90)" text-anchor="middle" class="ax">Plan-Aufwand</text>
<rect x="339.5" y="651.5" width="214" height="18" fill="#fff" stroke="#6e6e6e" stroke-width="1"/>
<rect x="343" y="655.3" width="9.5" height="9.5" fill="#8cda7c"/>
<text x="357" y="664" class="lg">Plan-Aufwand</text>
<rect x="436" y="655.3" width="9.5" height="9.5" fill="#ecb68a"/>
<text x="448.3" y="664" class="lg" style="letter-spacing:.45px">Ist-Zeit</text>
<rect x="491.3" y="655.3" width="9.5" height="9.5" fill="#b8a2e4"/>
<text x="504.2" y="664" class="lg">Differenz</text>
</g>
<g id="icons">
<defs>
<linearGradient id="gFolder" x1="0" y1="0" x2="0" y2="1"><stop offset="0" stop-color="#f3e08a"/><stop offset="0.4" stop-color="#e9cb55"/><stop offset="1" stop-color="#e3c044"/></linearGradient>
<linearGradient id="gArrow" x1="0" y1="0" x2="0.3" y2="1"><stop offset="0" stop-color="#153f94"/><stop offset="0.45" stop-color="#2f68b8"/><stop offset="0.8" stop-color="#a8d0f6"/><stop offset="1" stop-color="#3a72c0"/></linearGradient>
<linearGradient id="gBlueDoc" x1="0" y1="0" x2="1" y2="1"><stop offset="0" stop-color="#ffffff"/><stop offset="1" stop-color="#b4cff5"/></linearGradient>
<linearGradient id="gPrn" x1="0" y1="0" x2="0" y2="1"><stop offset="0" stop-color="#ffffff"/><stop offset="1" stop-color="#c4c6cc"/></linearGradient>
<radialGradient id="gGlobe" cx="0.35" cy="0.3" r="0.8"><stop offset="0" stop-color="#b9dcff"/><stop offset="0.5" stop-color="#3f86dd"/><stop offset="1" stop-color="#1a4fa8"/></radialGradient>
<radialGradient id="gHelp" cx="0.4" cy="0.3" r="0.8"><stop offset="0" stop-color="#8fd08c"/><stop offset="0.6" stop-color="#3f9a45"/><stop offset="1" stop-color="#2a6a30"/></radialGradient>
<radialGradient id="gBtn" cx="0.4" cy="0.3" r="0.8"><stop offset="0" stop-color="#ffffff"/><stop offset="1" stop-color="#b6ccf2"/></radialGradient>
<linearGradient id="gBino" x1="0" y1="0" x2="1" y2="0"><stop offset="0" stop-color="#565656"/><stop offset="0.28" stop-color="#c2c2c2"/><stop offset="0.6" stop-color="#8a8a8a"/><stop offset="1" stop-color="#4e4e4e"/></linearGradient>
<linearGradient id="gDoc" x1="0" y1="0" x2="1" y2="1"><stop offset="0" stop-color="#fafafa"/><stop offset="1" stop-color="#d9d9d9"/></linearGradient>
<linearGradient id="gCam2" x1="0" y1="0" x2="1" y2="0"><stop offset="0" stop-color="#1e1e1e"/><stop offset="0.55" stop-color="#3c3c3c"/><stop offset="1" stop-color="#9a9a9a"/></linearGradient>
<linearGradient id="gCamTop" x1="0" y1="0" x2="1" y2="0"><stop offset="0" stop-color="#f2f2f2"/><stop offset="1" stop-color="#a8a8a8"/></linearGradient>
<linearGradient id="gCam" x1="0" y1="0" x2="1" y2="1"><stop offset="0" stop-color="#bdbdbd"/><stop offset="0.4" stop-color="#3a3a3a"/><stop offset="1" stop-color="#8a8a8a"/></linearGradient>
<radialGradient id="gNavG" cx="0.4" cy="0.3" r="0.8"><stop offset="0" stop-color="#9ad08c"/><stop offset="1" stop-color="#3b8a2e"/></radialGradient>
<radialGradient id="gNavD" cx="0.4" cy="0.3" r="0.8"><stop offset="0" stop-color="#d8d8d8"/><stop offset="1" stop-color="#a2a2a2"/></radialGradient>
</defs>
<!-- title icon -->
<g id="ic-title">
<rect x="6.9" y="6" width="14" height="14" rx="1.6" fill="#fdfdfd"/>
<path d="M15.2 6 L18.9 6 L19.2 11 L19.9 20 L13.2 20 L14 13.4 Q14.6 11.4 15.4 10.6Z" fill="#ee2a1e"/>
<path d="M14.9 10.4 L17.2 10.4 L17.2 12.6 L14.5 12.6Z" fill="#b83a1c" opacity=".7"/>
<path d="M7 10.9 Q11 9.6 15.2 7.2" fill="none" stroke="#e8281e" stroke-width="1.1"/>
<path d="M7 13.2 Q9.8 15.6 10.6 20" fill="none" stroke="#e8281e" stroke-width="1.4"/>
</g>
<!-- menu doc icon -->
<g id="ic-doc">
<path d="M11.7 24.7 L19.4 24.7 L23.3 28.6 L23.3 39.2 L11.7 39.2Z" fill="url(#gDoc)" stroke="#9c9c9c" stroke-width=".8"/>
<path d="M12 39.5 L23.5 39.5" stroke="#1e1e1e" stroke-width="1.1"/>
<path d="M23.5 29 L23.5 39.4" stroke="#7a7a7a" stroke-width=".8"/>
<path d="M19.4 24.7 L19.4 28.6 L23.3 28.6Z" fill="#fff" stroke="#a6a6a6" stroke-width=".6"/>
<rect x="8" y="26.1" width="10.2" height="3.7" fill="#e6141e"/>
<path d="M12.3 37.6 Q15.4 34.4 16.4 30.2 Q17.4 34 21.6 35.8 M12.6 37.4 Q16.8 34.4 21.4 35.6" fill="none" stroke="#ee2a48" stroke-width="1.1" stroke-linecap="round"/>
</g>
<!-- open -->
<g id="ic-open">
<path d="M19.2 69 L19.2 54.6 L20.6 53.2 L27.6 53.2 L29 55.2 L32.4 55.2 L32.4 59 L38.7 59 L38.7 69Z" fill="#e9ca52"/>
<path d="M20.4 54.4 L27 54.4 L28 55.8 L31.4 55.8 L31.4 58 L20.4 58Z" fill="#f6e48e"/>
<path d="M21 54.6 L26.4 54.6" stroke="#fdf8d8" stroke-width="1"/>
<path d="M19.2 69 L19.4 61 L21.6 58 L38.7 58 L38.7 69Z" fill="url(#gFolder)"/>
<path d="M22.2 59.4 L30 59.4" stroke="#fcf6d0" stroke-width="1.1"/>
<path d="M21.4 60.8 L24.8 60.8 M21.2 62.4 L22.6 62.4" stroke="#f8ecae" stroke-width="1"/>
<path d="M27.2 51.2 Q31 47.4 34.8 50 Q36.6 51.6 36.8 54.2 L38.8 54.2 L35 59.4 L31.6 54.2 L33.8 54.2 Q33.4 52 31.4 51.4 Q29.4 50.8 27.2 51.2Z" fill="url(#gArrow)"/>
</g>
<!-- save -->
<g id="ic-save">
<path d="M53.2 49.9 L68.8 49.9 L69.9 51 L69.9 67 L52.1 67 L52.1 51Z" fill="#8a84d8"/>
<rect x="52.1" y="51.4" width="3.2" height="15.6" fill="#8683bf"/>
<rect x="53.4" y="51" width="1" height="16" fill="#9a98c8"/>
<rect x="65.6" y="51" width="4.3" height="16" fill="#7a78d6"/>
<rect x="56.2" y="53.6" width="9.4" height="4.4" fill="#a59cea"/>
<rect x="57" y="50" width="9.2" height="3.8" rx=".6" fill="#4c4c50"/>
<rect x="58.6" y="50.9" width="5.6" height="1.8" fill="#e6e6ee"/>
<rect x="55.8" y="57.9" width="10.8" height="9.1" fill="#171f78"/>
<rect x="57" y="59" width="8.4" height="2" fill="#3c4cae"/>
<rect x="57.8" y="61" width="6.6" height="5.2" fill="#f4f4f8"/>
<path d="M58.6 62.6 L63.6 62.6 M58.6 64.6 L63.6 64.6" stroke="#6e6e7a" stroke-width=".9"/>
</g>
<!-- print -->
<g id="ic-print">
<path d="M83.3 57 Q83.3 54.3 86 54.3 L100 54.3 Q102.7 54.3 102.7 57 L102.7 65.4 Q102.7 67.2 100.9 67.2 L85.1 67.2 Q83.3 67.2 83.3 65.4Z" fill="url(#gPrn)" stroke="#a2a4ac" stroke-width=".8"/>
<path d="M87.4 49.3 L96.2 49.3 L98.8 52 L98.8 56.4 L87.4 56.4Z" fill="url(#gBlueDoc)" stroke="#6f9de6" stroke-width=".9"/>
<path d="M96.2 49.3 L96.2 52 L98.8 52" fill="#fff" stroke="#7aa5e8" stroke-width=".7"/>
<path d="M87 56.7 L99.4 56.7" stroke="#6b6d74" stroke-width="1.1"/>
<circle cx="85.6" cy="57.4" r=".7" fill="#8a8c94"/>
<path d="M87 63.2 L99 63.2" stroke="#55575e" stroke-width="1.2"/>
<path d="M87.8 63.6 L98.4 63.6 L101 68.5 L85.4 68.5Z" fill="#f7f8fc" stroke="#5d8fe0" stroke-width=".8"/>
<path d="M88.2 67.2 L90 64.6 L95 64.6 L95.6 67.2Z" fill="#f2c62c"/><path d="M94.4 67.2 L95.6 64.8 L97.2 67.2Z" fill="#d85a3a"/><rect x="96.6" y="65.6" width="1.8" height="1.6" fill="#5aac50"/>
</g>
<!-- email -->
<g id="ic-email">
<circle cx="123.5" cy="56.9" r="8.3" fill="url(#gGlobe)" stroke="#2451a6" stroke-width=".7"/>
<path d="M120.4 50.6 Q123 49.6 125.8 51.2 Q126.8 53 125 54.6 Q126.4 56.4 124.6 58.2 Q122.8 59.2 122 57 Q119.6 55.6 119.8 53 Q119.4 51.4 120.4 50.6Z M128.6 53.6 Q130.8 54.4 131.2 57 Q130.8 59.4 129.2 59.8 Q127.4 58 128.6 53.6Z M122.6 60 Q125 59.2 127.4 60.4 L122.8 60.6Z" fill="#2f8c42"/>
<ellipse cx="119.8" cy="53.2" rx="1.6" ry="1.3" fill="#eaf4ff" opacity=".9"/>
<rect x="119.6" y="60.3" width="15.2" height="8.4" fill="#fdfdff" stroke="#5b8fdc" stroke-width="1"/>
<path d="M119.8 60.5 L127.2 66 L134.6 60.5 M119.8 68.5 L125.4 64.7 M134.6 68.5 L129 64.7" fill="none" stroke="#74a2e4" stroke-width=".9"/>
</g>
<!-- binoculars -->
<g id="ic-bino">
<rect x="150.8" y="50" width="5.2" height="4" rx="1.2" fill="#7d7d7d"/><rect x="158.4" y="50" width="5.2" height="4" rx="1.2" fill="#7d7d7d"/>
<rect x="151.6" y="50.6" width="3.6" height="1.1" fill="#a9b8f0"/><rect x="159.2" y="50.6" width="3.6" height="1.1" fill="#a9b8f0"/>
<path d="M150.6 53.4 L156.2 53.4 L156.9 57 L156.9 66.6 Q152.6 69.4 148.3 66.6 L148.3 58 Q148.6 55 150.6 53.4Z" fill="url(#gBino)"/>
<path d="M158.4 53.4 L163.6 53.4 Q165.6 55 165.9 58 L165.9 66.6 Q161.8 69.4 157.7 66.6 L157.7 57Z" fill="url(#gBino)"/>
<rect x="156.2" y="56" width="2.2" height="5.4" fill="#b8b8b8"/>
<path d="M148.4 64.6 Q152.6 66.8 156.9 64.6 M157.7 64.6 Q161.8 66.8 165.9 64.6" fill="none" stroke="#555" stroke-width=".9"/>
<path d="M148.6 58.4 Q152.6 57 156.8 58.4 M157.8 58.4 Q161.8 57 165.8 58.4" fill="none" stroke="#6a6a6a" stroke-width=".6"/>
</g>
<!-- hand -->
<g id="ic-hand">
<path d="M196.4 68.8 Q194.6 64.4 191.8 61.2 Q190.6 59.2 192.2 58.8 Q194 58.6 196 61.6 L195.2 53.4 Q195.4 51.8 196.8 52 Q197.8 52.2 198.2 53.6 L199 58.4 L199.2 51 Q199.6 49.6 200.8 49.8 Q202 50 202.2 51.4 L202.6 58.2 L203.6 52.2 Q204.2 51 205.2 51.4 Q206.2 51.8 206 53.2 L205.6 59.4 L206.8 55.6 Q207.6 54.6 208.4 55.2 Q209 56 208.6 57.4 Q207.6 62.8 205.4 68.8Z" fill="#fdfdff" stroke="#8a8c96" stroke-width=".9" stroke-linejoin="round"/>
<path d="M197 68 Q200 63 205 66 L204.8 68.4Z" fill="#c9d6f0" opacity=".8"/>
</g>
<!-- text select -->
<g id="ic-text">
<path d="M223 49.5 L225.4 49.5 Q226.6 49.6 226.7 50.6 Q226.8 49.6 228 49.5 L230.6 49.5 M226.7 50.4 L226.7 65.2 M223 66.2 L225.4 66.2 Q226.6 66.1 226.7 65.1 Q226.8 66.1 228 66.2 L230.6 66.2" fill="none" stroke="#000" stroke-width="1.3"/>
<path d="M232.4 53.4 L240 59.6 L232.4 64.2Z" fill="#4e4e4e"/>
</g>
<!-- snapshot -->
<g id="ic-cam">
<rect x="254.5" y="49.5" width="19" height="19" fill="none" stroke="#666" stroke-width=".9" stroke-dasharray="3 2"/>
<rect x="255.4" y="54.4" width="16" height="11.8" rx=".8" fill="url(#gCam2)"/>
<rect x="255.4" y="54.4" width="16" height="3" fill="url(#gCamTop)"/>
<rect x="256.6" y="53.2" width="3.6" height="1.6" fill="#555"/>
<rect x="267" y="55" width="3.6" height="1.3" fill="#5b84e0"/>
<circle cx="264" cy="61" r="4.1" fill="#161616" stroke="#8c8c8c" stroke-width=".9"/>
<circle cx="264" cy="61" r="2" fill="#2f5fc8"/><circle cx="263.3" cy="60.3" r=".8" fill="#a9c6ff"/>
</g>
<!-- magnifier -->
<g id="ic-zoom">
<path d="M306.4 61 L313.6 68.2" stroke="#c0392b" stroke-width="2.6" stroke-linecap="round"/>
<path d="M306.6 60.6 L313.2 67.2" stroke="#f5c24a" stroke-width="1.3" stroke-linecap="round"/>
<circle cx="301.7" cy="55.8" r="6" fill="#e2e8fb" stroke="#8a82cc" stroke-width="1.3"/>
<path d="M298.4 55.8 L305 55.8 M301.7 52.5 L301.7 59.1" stroke="#24459c" stroke-width="1.7"/>
</g>
<path d="M319.5 57 L325.5 57 L322.5 60Z" fill="#000"/>
<!-- fit page -->
<g id="ic-fitp">
<rect x="338.5" y="49.6" width="15" height="19" fill="url(#gBlueDoc)" stroke="#7aa5e6" stroke-width="1"/>
<path d="M346.2 51.4 L346.2 55.6 M344 53.6 L346.2 51.2 L348.4 53.6 M346.2 62.4 L346.2 66.6 M344 64.4 L346.2 66.8 L348.4 64.4" fill="none" stroke="#2c5c9e" stroke-width="1.1"/>
</g>
<!-- fit width -->
<g id="ic-fitw">
<rect x="370.5" y="49.6" width="15" height="19" fill="url(#gBlueDoc)" stroke="#7aa5e6" stroke-width="1"/>
<path d="M372 58.6 L376.2 58.6 M374.2 56.4 L371.8 58.6 L374.2 60.8 M379.8 58.6 L384 58.6 M381.8 56.4 L384.2 58.6 L381.8 60.8" fill="none" stroke="#2c5c9e" stroke-width="1.1"/>
</g>
<!-- zoom out / in buttons -->
<g id="ic-zo"><circle cx="409.8" cy="57.8" r="6.3" fill="url(#gBtn)" stroke="#7d98da" stroke-width="1.2"/><path d="M406.6 57.8 L413 57.8" stroke="#24459c" stroke-width="1.9"/></g>
<path d="M477.5 57 L483.5 57 L480.5 60Z" fill="#000"/>
<g id="ic-zi"><circle cx="503.6" cy="57.8" r="6.3" fill="url(#gBtn)" stroke="#7d98da" stroke-width="1.2"/><path d="M500.4 57.8 L506.8 57.8 M503.6 54.6 L503.6 61" stroke="#24459c" stroke-width="1.9"/></g>
<!-- rotate/page icon -->
<g id="ic-page">
<path d="M543.8 57.6 L554.6 57.6 L554.6 65 L551.4 68.4 L543.8 68.4Z" fill="#f0f0f0" stroke="#b9b9b9" stroke-width=".8"/>
<path d="M554.6 65 L551.4 65 L551.4 68.4" fill="#fff" stroke="#a9a9a9" stroke-width=".7"/>
<path d="M535.4 49.6 L543.6 49.6 L546.8 52.8 L546.8 60.6 L535.4 60.6Z" fill="url(#gBlueDoc)" stroke="#5e8edc" stroke-width="1"/>
<path d="M543.6 49.6 L543.6 52.8 L546.8 52.8" fill="none" stroke="#5e8edc" stroke-width=".8"/>
<path d="M549 50.4 L552.4 50.4 L552.4 54.6 M550.6 53 L552.4 55.2 L554.2 53" fill="none" stroke="#000" stroke-width="1.1"/>
</g>
<path d="M559.5 56.8 L565.5 56.8 L562.5 59.8Z" fill="#000"/>
<!-- help -->
<g id="ic-help"><circle cx="592.9" cy="57.9" r="7.8" fill="url(#gHelp)" stroke="#2f6d35" stroke-width=".6"/>
<text x="592.9" y="62.6" text-anchor="middle" font-family="Liberation Sans, sans-serif" font-weight="bold" font-size="13" fill="#fff">?</text></g>
<path d="M630.5 56.8 L636.5 56.8 L633.5 59.8Z" fill="#000"/>
<!-- Y! -->
<g font-family="Liberation Serif, serif" font-weight="bold" fill="#e01428"><text transform="translate(734.2 64) scale(1.3 1)" font-size="15.5">Y</text><text transform="translate(749 64) scale(1.15 1)" font-size="15.5" font-style="italic">!</text></g>
<!-- yahoo toolbar button content -->
<g id="ic-yahoo">
<path d="M821.6 52.2 L822 64.4 L819.6 62 L817.6 67 L815.4 66.2 L817.2 61.6 L813.6 61.4Z" fill="#fff" stroke="#000" stroke-width="1" stroke-linejoin="miter"/>
<g font-family="Liberation Serif, serif" font-weight="bold" fill="#e21e46">
<text transform="translate(822.6 60) scale(1.38 1)" font-size="17">Y</text>
<text transform="translate(837.6 59.7) scale(1.5 1)" font-size="10.8">A</text>
<text transform="translate(849.2 58.6) scale(1.16 1)" font-size="14.2">H</text>
<text transform="translate(862 58.2) scale(1.25 1)" font-size="14.4">O</text>
<text transform="translate(875.6 58) scale(1.25 1)" font-size="14.8">O</text>
<text transform="translate(887.4 58) scale(1 1)" font-size="14.6" font-style="italic">!</text>
</g>
<text x="893.8" y="57.8" font-family="Liberation Sans, sans-serif" font-weight="bold" font-size="8.6" fill="#6a6a6a" stroke="#6a6a6a" stroke-width=".35" letter-spacing="1.2">TOOLBAR</text>
<text x="861.6" y="67.5" font-family="Liberation Sans, sans-serif" font-size="8.6" fill="#000" letter-spacing=".95">Gratis</text>
</g>
<!-- caption glyphs -->
<g fill="#000">
<rect x="904" y="15" width="6" height="2"/>
<path d="M919 8 h9 v9 h-9z M920 10 v6 h7 v-6z" fill-rule="evenodd"/>
<path d="M938 9 h2 l2 2 l2 -2 h2 l-3 3.5 l3 3.5 h-2 l-2 -2 l-2 2 h-2 l3 -3.5z"/>
<rect x="904" y="34" width="6" height="2"/>
<path d="M921 27 h6 v6 h-1.5 v-1 h.5 v-3 h-4 v1 h-1z M919 30 h6 v6 h-6z M920 32 v3 h4 v-3z" fill-rule="evenodd"/>
<path d="M938 28 h2 l2 2 l2 -2 h2 l-3 3.5 l3 3.5 h-2 l-2 -2 l-2 2 h-2 l3 -3.5z"/>
</g>
<!-- scrollbar arrows -->
<g fill="#000">
<path d="M941 81 L946 85.5 L941 90Z"/>
<path d="M940 103 L943.5 99 L947 103Z"/>
<path d="M940 738 L947 738 L943.5 742Z"/>
</g>
<!-- left tabs -->
<g id="tabs" font-family="Liberation Sans, sans-serif">
<!-- Seiten -->
<path d="M23.5 82 L6.5 98.5 L6.5 144.5 Q6.5 146.5 8.5 146.5 L23.5 146.5Z" fill="#d4d0c8"/>
<path d="M23.5 83.4 L7.6 99 L7.6 144.6" fill="none" stroke="#fff" stroke-width="1.2"/>
<path d="M23.5 82 L6.5 98.5 L6.5 144.5 Q6.5 146.5 8.5 146.5 L23.5 146.5" fill="none" stroke="#333" stroke-width="1"/>
<g fill="#fff"><rect x="10" y="142" width="1" height="1"/><rect x="13" y="142" width="1" height="1"/><rect x="16" y="142" width="1" height="1"/><rect x="19" y="142" width="1" height="1"/></g>
<g fill="#808080"><rect x="11" y="143" width="1" height="1"/><rect x="14" y="143" width="1" height="1"/><rect x="17" y="143" width="1" height="1"/><rect x="20" y="143" width="1" height="1"/></g>
<text transform="translate(19 134.4) rotate(-90)" font-weight="bold" font-size="11.5">Seiten</text>
<!-- Anlagen -->
<defs><linearGradient id="gStrip" x1="0" y1="0" x2="0" y2="1"><stop offset="0" stop-color="#a5a39d"/><stop offset="1" stop-color="#8b8983"/></linearGradient></defs>
<path d="M23.5 540.5 L6.5 556.5 L6.5 612 Q6.5 614 8.5 614 L23.5 614Z" fill="#d4d0c8"/>
<rect x="7.5" y="608.3" width="16" height="5.2" fill="url(#gStrip)"/>
<path d="M23.5 541.8 L7.6 556.9 L7.6 612" fill="none" stroke="#f4f3ef" stroke-width="1"/>
<path d="M23.5 540.5 L6.5 556.5 L6.5 612 Q6.5 614 8.5 614 L23.5 614" fill="none" stroke="#4a4a45" stroke-width="1"/>
<g fill="#fff"><rect x="10" y="610" width="1.4" height="1.4"/><rect x="13" y="610" width="1.4" height="1.4"/><rect x="16" y="610" width="1.4" height="1.4"/></g>
<text transform="translate(19.6 599.8) rotate(-90)" font-size="10.5">Anlagen</text>
<!-- Kommentare -->
<path d="M23.5 607 L6.5 624 L6.5 706.5 Q6.5 708.5 8.5 708.5 L23.5 708.5Z" fill="#d4d0c8"/>
<rect x="7.5" y="702.3" width="16" height="5.7" fill="url(#gStrip)"/>
<path d="M23.5 608.4 L7.6 624.4 L7.6 706.5" fill="none" stroke="#f4f3ef" stroke-width="1"/>
<path d="M23.5 607 L6.5 624 L6.5 706.5 Q6.5 708.5 8.5 708.5 L23.5 708.5" fill="none" stroke="#4a4a45" stroke-width="1"/>
<path d="M8 708 L23.5 708" stroke="#3a3a36" stroke-width="1.2"/>
<g fill="#fff"><rect x="10" y="704.2" width="1.4" height="1.4"/><rect x="13" y="704.2" width="1.4" height="1.4"/><rect x="16" y="704.2" width="1.4" height="1.4"/><rect x="19" y="704.2" width="1.4" height="1.4"/></g>
<text transform="translate(19.6 690.8) rotate(-90)" font-size="10.5">Kommentare</text>
</g>
<!-- status bar icons -->
<defs>
<linearGradient id="gNav" x1="0" y1="0" x2="1" y2="1"><stop offset="0" stop-color="#b9d2f6"/><stop offset="1" stop-color="#2a58b0"/></linearGradient>
<linearGradient id="gNavB" x1="0" y1="0" x2="1" y2="0"><stop offset="0" stop-color="#2f5fb6"/><stop offset="1" stop-color="#8fb0ea"/></linearGradient>
<linearGradient id="gBlueDoc2" x1="0" y1="0" x2="1" y2="1"><stop offset="0" stop-color="#dbe8fb"/><stop offset="1" stop-color="#93b8ee"/></linearGradient>
<linearGradient id="gGray" x1="0" y1="0" x2="1" y2="1"><stop offset="0" stop-color="#ffffff"/><stop offset="1" stop-color="#a9a9a9"/></linearGradient>
</defs>
<g id="ic-mon">
<rect x="15.2" y="753.2" width="15.6" height="13.4" fill="#cfcfcf" stroke="#8e8e8e" stroke-width=".7"/>
<rect x="17" y="755" width="12.2" height="9" fill="#000"/>
<rect x="20.2" y="756" width="6.2" height="7.4" fill="#dbe6fa"/>
<path d="M21 757.6 h4.6 M21 759.6 h4.6 M21 761.6 h4.6" stroke="#5d83d0" stroke-width=".8"/>
<rect x="28" y="765" width="1.4" height="1.4" fill="#3aa63a"/>
<rect x="18.4" y="767.6" width="9.2" height="1" fill="#8e8e8e"/>
</g>
<g id="ic-min2">
<rect x="48.5" y="754.6" width="13" height="14" fill="url(#gGray)" stroke="#6f8fd8" stroke-width=".8"/>
<rect x="48.9" y="755" width="12.2" height="3.4" fill="#fff"/>
<path d="M48.5 758.6 h13" stroke="#8e8e8e" stroke-width=".7"/>
<rect x="52" y="762" width="6" height="2" fill="#2c4c9c"/>
</g>
<g id="ic-nav">
<rect x="344" y="754" width="3.4" height="15" fill="url(#gNavB)"/>
<path d="M350.4 761.6 L359 754.4 L359 769Z" fill="url(#gNav)"/>
<path d="M379.4 761.6 L388 754.4 L388 769Z" fill="url(#gNav)"/>
<path d="M501.6 761.6 L493.2 754.4 L493.2 769Z" fill="url(#gNav)"/>
<path d="M531 761.6 L522.6 754.4 L522.6 769Z" fill="url(#gNav)"/>
<rect x="533.2" y="754" width="3.4" height="15" fill="url(#gNavB)"/>
<circle cx="572.2" cy="760.8" r="7.6" fill="url(#gNavG)" stroke="#3a7a2e" stroke-width=".6"/>
<path d="M567.6 760.8 L572 757 L572 759.4 L576.6 759.4 L576.6 762.2 L572 762.2 L572 764.6Z" fill="#fff"/>
<circle cx="604.2" cy="760.8" r="7.6" fill="url(#gNavD)" stroke="#9a9a9a" stroke-width=".6"/>
<path d="M608.8 760.8 L604.4 757 L604.4 759.4 L599.8 759.4 L599.8 762.2 L604.4 762.2 L604.4 764.6Z" fill="#dedede"/>
</g>
<g id="ic-layout" stroke="#78a2e4" stroke-width="1">
<rect x="830.5" y="754.2" width="12" height="14.2" fill="url(#gBlueDoc)"/>
<rect x="862.5" y="754.2" width="12" height="5.8" fill="url(#gBlueDoc)"/><rect x="862.5" y="762.4" width="12" height="6" fill="url(#gBlueDoc2)"/>
<rect x="894.2" y="754.2" width="4.6" height="5.8" fill="url(#gBlueDoc)"/><rect x="901.6" y="754.2" width="4.6" height="5.8" fill="url(#gBlueDoc)"/>
<rect x="894.2" y="762.4" width="4.6" height="6" fill="url(#gBlueDoc2)"/><rect x="901.6" y="762.4" width="4.6" height="6" fill="url(#gBlueDoc2)"/>
<rect x="925.2" y="755.4" width="6.4" height="10" fill="url(#gBlueDoc)"/><rect x="933.8" y="755.4" width="6.4" height="10" fill="url(#gBlueDoc)"/>
</g>

</g>
</svg>
</div>
</body></html>
